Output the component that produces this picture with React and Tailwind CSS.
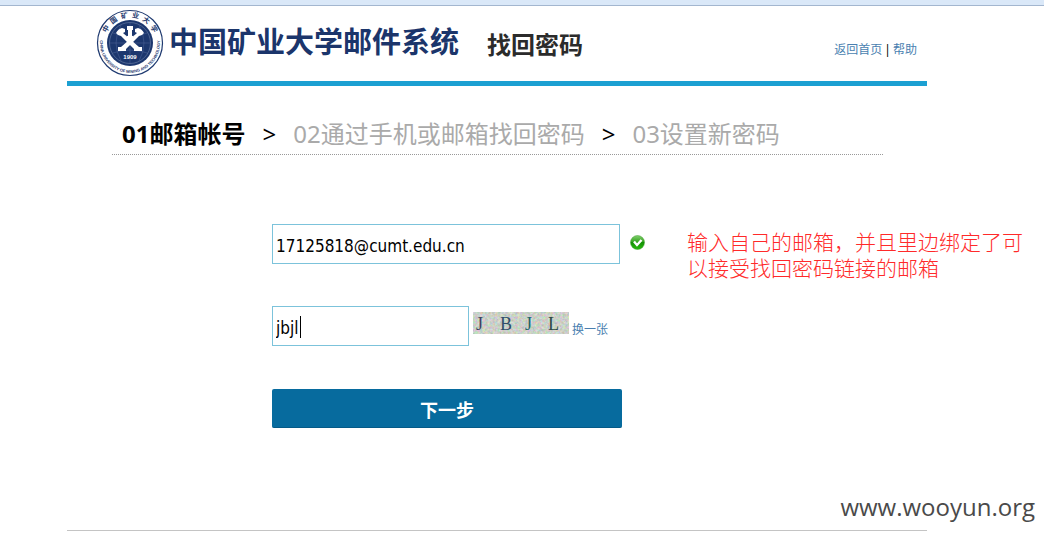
import { useState } from 'react'

const STEPS = ['01邮箱帐号', '02通过手机或邮箱找回密码', '03设置新密码']

const CAPTCHA = [
  { char: 'J', x: 3, color: '#403f63' },
  { char: 'B', x: 27, color: '#2f4e6a' },
  { char: 'J', x: 52, color: '#20656a' },
  { char: 'L', x: 75, color: '#2c4b46' },
]

function Seal() {
  return (
    <svg viewBox="0 0 68 68" className="mb-[2px] size-[68px] shrink-0" role="img" aria-label="中国矿业大学">
      <defs>
        <path id="seal-top" d="M 8.5 34 A 25.5 25.5 0 0 1 59.5 34" />
        <path id="seal-bottom" d="M 4.4 29 A 30 30 0 1 0 63.6 29" />
      </defs>
      <circle cx="34" cy="34" r="32.5" fill="#fff" stroke="#1f3a70" strokeWidth="1.2" />
      <circle cx="34" cy="34" r="23" fill="#1c376e" />
      <circle cx="34" cy="34" r="20.5" fill="none" stroke="#6f83aa" strokeWidth="0.6" />
      <g fill="none" stroke="#50679a" strokeWidth="0.5">
        <path d="M14 34h40M17 24q17 6 34 0M17 44q17-6 34 0" />
        <path d="M34 14v40M25 16q-10 18 0 36M43 16q10 18 0 36" />
      </g>
      <g fill="#fff">
        <path d="M31 17h6v4h-1v6h-4v-6h-1z" />
        <path d="M20 24q2-4 6-5l3 1v3l-2 1 16 14h3v4h-8v-2L25 27l-3-1z" />
        <path d="M48 24q-2-4-6-5l-3 1v3l2 1-16 14h-3v4h8v-2l13-13 3-1z" />
        <path d="M31 27h6v5h-6z" />
      </g>
      <text x="34" y="50" textAnchor="middle" fill="#fff" className="font-['Liberation_Sans'] text-[6px] font-bold">
        1909
      </text>
      <g fill="#1c376e">
        <text className="font-['Noto_Sans_CJK_SC',sans-serif] text-[7px] font-bold">
          <textPath href="#seal-top" startOffset="50%" textAnchor="middle">
            {['中', '国', '矿', '业', '大', '学'].join('\u2002')}
          </textPath>
        </text>
        <text className="font-['Liberation_Sans'] text-[4px] font-bold">
          <textPath href="#seal-bottom" startOffset="50%" textAnchor="middle">
            CHINA UNIVERSITY OF MINING AND TECHNOLOGY
          </textPath>
        </text>
      </g>
    </svg>
  )
}

function ValidIcon() {
  return (
    <svg viewBox="0 0 15 15" className="size-[15px] shrink-0" role="img" aria-label="有效">
      <defs>
        <linearGradient id="valid" x1="0" y1="0" x2="0" y2="1">
          <stop offset="0" stopColor="#83cf70" />
          <stop offset="0.45" stopColor="#35a51f" />
          <stop offset="0.5" stopColor="#149005" />
          <stop offset="1" stopColor="#28bc0c" />
        </linearGradient>
      </defs>
      <circle cx="7.5" cy="7.5" r="7" fill="url(#valid)" stroke="#3f9d2e" strokeWidth="0.5" />
      <path d="M4 6.5l3 3.5 4.5-5" fill="none" stroke="#fff" strokeWidth="2.4" />
    </svg>
  )
}

function Captcha() {
  return (
    <svg viewBox="0 0 96 22" className="h-[22px] w-24 shrink-0" role="img" aria-label="验证码">
      <filter id="noise" x="0" y="0" width="100%" height="100%" colorInterpolationFilters="sRGB">
        <feTurbulence type="fractalNoise" baseFrequency="0.4" numOctaves="2" seed="4" />
        <feColorMatrix values="0.7 0 0 0 0.44  0 0.6 0 0 0.51  0 0 0.7 0 0.42  0 0 0 0 1" />
      </filter>
      <rect width="96" height="22" fill="#cfd3cc" />
      <rect width="96" height="22" filter="url(#noise)" opacity="0.5" />
      {CAPTCHA.map((c) => (
        <text key={c.x} x={c.x} y="18" fill={c.color} className="font-['Liberation_Serif',serif] text-[18px]">
          {c.char}
        </text>
      ))}
    </svg>
  )
}

export default function App() {
  const [email, setEmail] = useState('17125818@cumt.edu.cn')
  const [code, setCode] = useState('jbjl')

  const inputClass =
    "h-10 border border-[#7cc3db] bg-white px-[3px] pt-[3px] font-['DejaVu_Sans_Condensed','Noto_Sans',sans-serif] text-[17px] text-black outline-none"

  return (
    <div className="bg-white font-['Noto_Sans','Noto_Sans_CJK_SC',sans-serif] text-black">
      <div className="h-[6px] border-b border-[#a3b6cf] bg-[#dae8f8]" />

      <header className="mr-[117px] ml-[67px] flex h-20 items-center border-b-5 border-[#1ca0d2] pl-[29px]">
        <Seal />
        <span className="ml-[5px] pb-2 font-['Noto_Sans_CJK_SC'] text-[29px] leading-8 font-bold whitespace-nowrap text-[#1b356b]">
          中国矿业大学邮件系统
        </span>
        <h1 className="ml-7 font-['Noto_Sans_CJK_SC'] text-2xl leading-8 font-bold whitespace-nowrap text-[#2b2b2b]">
          找回密码
        </h1>
        <nav className="mt-3 mr-[10px] ml-auto flex gap-[2px] text-xs whitespace-nowrap">
          <a href="#home" className="text-[#4a7fb0]">返回首页</a>
          <span>|</span>
          <a href="#help" className="text-[#4a7fb0]">帮助</a>
        </nav>
      </header>

      <ol className="mt-8 mr-[161px] ml-28 flex items-center border-b border-dotted border-[#999] pb-1 pl-[10px] text-2xl leading-8 whitespace-nowrap">
        {STEPS.map((step, i) => (
          <li key={step} className={i === 0 ? 'font-bold' : 'text-[#aaa]'}>
            {i > 0 && <span className="mx-[17px] text-black">&gt;</span>}
            {step}
          </li>
        ))}
      </ol>

      <form className="mt-[69px] ml-[272px]" onSubmit={(e) => e.preventDefault()}>
        <div className="flex h-10 items-center">
          <input
            aria-label="邮箱帐号"
            value={email}
            onChange={(e) => setEmail(e.target.value)}
            className={`w-[348px] shrink-0 ${inputClass}`}
          />
          <span className="ml-[10px] pb-1">
            <ValidIcon />
          </span>
          <p className="mt-5 ml-[42px] w-[340px] shrink-0 font-['Noto_Sans_CJK_SC'] text-[21px] leading-[26px] font-light text-[#ff2a2a]">
            输入自己的邮箱，并且里边绑定了可以接受找回密码链接的邮箱
          </p>
        </div>

        <div className="mt-[42px] flex h-10 items-center">
          <div className="relative">
            <input
              aria-label="验证码"
              value={code}
              onChange={(e) => setCode(e.target.value)}
              className={`w-[197px] ${inputClass}`}
            />
            <span className="absolute top-[10px] left-7 h-[22px] w-px bg-black" />
          </div>
          <span className="ml-1 pb-[6px]">
            <Captcha />
          </span>
          <button type="button" className="mt-2 ml-[3px] text-xs text-[#4a7fb0]">换一张</button>
        </div>

        <button
          type="submit"
          className="mt-[43px] block h-[39px] w-[350px] rounded-xs border-b border-[#055a87] bg-[#076b9e] pt-1 text-lg font-bold text-white"
        >
          下一步
        </button>
      </form>

      <p className="mt-[63px] mr-[9px] text-right font-['Open_Sans','Noto_Sans',sans-serif] text-2xl leading-8 text-[#4a4a4a]">www.wooyun.org</p>
      <hr className="mt-[7px] mr-[117px] ml-[67px] border-[#c4c4c4]" />
    </div>
  )
}
